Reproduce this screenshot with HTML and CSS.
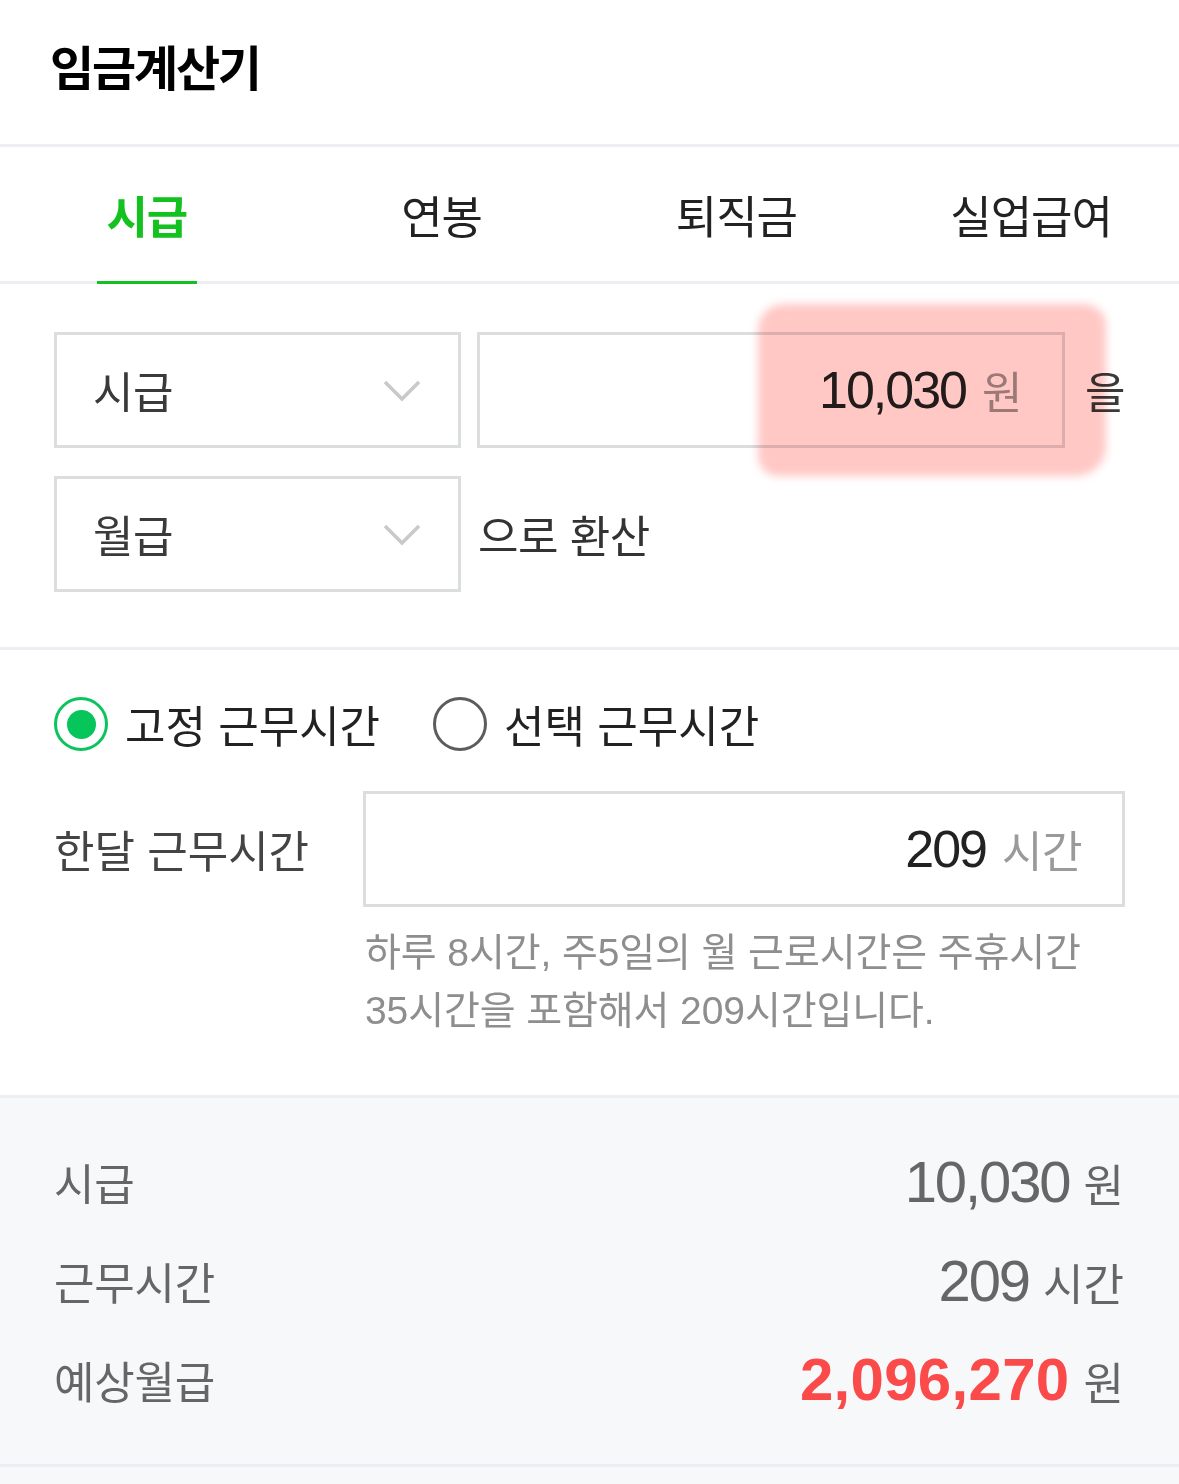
FILE: index.html
```html
<!DOCTYPE html>
<html lang="ko">
<head>
<meta charset="utf-8">
<title>임금계산기</title>
<link rel="stylesheet" href="styles.css">
</head>
<body>
<div class="page">
  <header class="header">
    <h1 class="title">임금계산기</h1>
  </header>

  <nav class="tabs">
    <div class="tab active"><span class="tab-label">시급</span></div>
    <div class="tab"><span class="tab-label">연봉</span></div>
    <div class="tab"><span class="tab-label">퇴직금</span></div>
    <div class="tab"><span class="tab-label">실업급여</span></div>
  </nav>

  <section class="convert">
    <div class="row row-first">
      <div class="select">
        <span class="select-text">시급</span>
        <svg class="chevron" width="38" height="22" viewBox="0 0 38 22"><polyline points="2,2 19,19 36,2" fill="none" stroke="#c9c9c9" stroke-width="3.5"/></svg>
      </div>
      <div class="amount">
        <span class="num">10,030</span><span class="unit">원</span>
      </div>
      <span class="suffix">을</span>
      <div class="highlight"></div>
    </div>
    <div class="row">
      <div class="select">
        <span class="select-text">월급</span>
        <svg class="chevron" width="38" height="22" viewBox="0 0 38 22"><polyline points="2,2 19,19 36,2" fill="none" stroke="#c9c9c9" stroke-width="3.5"/></svg>
      </div>
      <span class="convert-text">으로 환산</span>
    </div>
  </section>

  <section class="hours">
    <div class="radios">
      <label class="radio-item">
        <span class="radio checked"><span class="dot"></span></span>
        <span class="radio-text">고정 근무시간</span>
      </label>
      <label class="radio-item">
        <span class="radio"></span>
        <span class="radio-text">선택 근무시간</span>
      </label>
    </div>
    <div class="hours-row">
      <span class="hours-label">한달 근무시간</span>
      <div class="hours-input">
        <span class="num">209</span><span class="unit">시간</span>
      </div>
    </div>
    <p class="help">하루 8시간, 주5일의 월 근로시간은 주휴시간<br>35시간을 포함해서 209시간입니다.</p>
  </section>

  <section class="result">
    <div class="result-row">
      <span class="result-label">시급</span>
      <span class="result-value"><span class="rnum">10,030</span><span class="runit">원</span></span>
    </div>
    <div class="result-row">
      <span class="result-label">근무시간</span>
      <span class="result-value"><span class="rnum">209</span><span class="runit">시간</span></span>
    </div>
    <div class="result-row">
      <span class="result-label">예상월급</span>
      <span class="result-value"><span class="rnum total">2,096,270</span><span class="runit">원</span></span>
    </div>
  </section>
</div>
</body>
</html>
```

FILE: styles.css
```css
html, body {
  margin: 0;
  padding: 0;
  background: #f7f8fa;
}

body {
  font-family: "Liberation Sans", "Noto Sans CJK KR", sans-serif;
  color: #222;
}

.page {
  width: 1179px;
}

.header {
  background: #fff;
  display: flex;
  align-items: center;
  padding-left: 50px;
  box-sizing: border-box;
  border-bottom: 3px solid #eceef1;
  height: 147px;
}

.title {
  margin: 0;
  font-size: 48px;
  font-weight: 700;
  letter-spacing: -2.2px;
  color: #000;
  line-height: 1;
  transform: translateY(-2px);
}

.tabs {
  display: grid;
  grid-template-columns: repeat(4, 1fr);
  height: 137px;
  box-sizing: border-box;
  background: #fff;
  border-bottom: 3px solid #eceef1;
}

.tab {
  display: flex;
  justify-content: center;
  font-size: 45px;
  color: #222;
  letter-spacing: -1px;
}

.tab-label {
  position: relative;
  display: flex;
  align-items: center;
  padding: 0 10px 0 9px;
}

.tab.active {
  color: #13c11f;
  font-weight: 700;
}

.tab.active .tab-label::after {
  content: "";
  position: absolute;
  left: 0;
  right: 0;
  bottom: -3px;
  height: 3px;
  background: #13c11f;
}

.convert {
  background: #fff;
  padding: 48px 55px 55px 54px;
  display: flex;
  flex-direction: column;
  gap: 28px;
  border-bottom: 3px solid #eceef1;
}

.row {
  display: flex;
  align-items: center;
  height: 116px;
}

.row-first {
  position: relative;
}

.select {
  width: 407px;
  height: 116px;
  box-sizing: border-box;
  border: 3px solid #dcdddf;
  display: flex;
  align-items: center;
  justify-content: space-between;
  padding: 0 37px 0 36px;
  flex: none;
}

.select-text {
  font-size: 44px;
  color: #3a3a3a;
  letter-spacing: -0.5px;
}

.chevron {
  display: block;
  margin-top: 2px;
}

.amount {
  flex: 1;
  margin-left: 16px;
  height: 116px;
  box-sizing: border-box;
  border: 3px solid #dcdddf;
  display: flex;
  align-items: center;
  justify-content: flex-end;
  padding-right: 40px;
}

.num {
  font-size: 52px;
  letter-spacing: -2px;
  color: #222;
}

.unit {
  font-size: 44px;
  color: #9a9a9a;
  margin-left: 16px;
  letter-spacing: -0.5px;
}

.suffix {
  margin-left: 20px;
  font-size: 44px;
  color: #3a3a3a;
  width: 39px;
}

.highlight {
  position: absolute;
  left: 704px;
  top: -28px;
  width: 348px;
  height: 172px;
  background: #ffc8c5;
  border-radius: 26px 22px 30px 20px;
  filter: blur(4px);
  mix-blend-mode: multiply;
  pointer-events: none;
}

.convert-text {
  margin-left: 17px;
  font-size: 44px;
  color: #333;
  letter-spacing: -0.5px;
}

.hours {
  background: #fff;
  padding: 47px 54px 55px 54px;
  border-bottom: 3px solid #eceef1;
}

.radios {
  display: flex;
  align-items: center;
  height: 54px;
}

.radio-item {
  display: flex;
  align-items: center;
  margin-right: 53px;
}

.radio {
  width: 54px;
  height: 54px;
  box-sizing: border-box;
  border: 3px solid #5c5c5e;
  border-radius: 50%;
  display: flex;
  align-items: center;
  justify-content: center;
  flex: none;
}

.radio.checked {
  border-color: #0bc45d;
}

.dot {
  width: 29px;
  height: 29px;
  border-radius: 50%;
  background: #06c55a;
}

.radio-text {
  margin-left: 17px;
  font-size: 44px;
  color: #222;
  letter-spacing: 0;
}

.hours-row {
  display: flex;
  align-items: center;
  margin-top: 40px;
}

.hours-label {
  width: 309px;
  flex: none;
  font-size: 44px;
  color: #444;
  letter-spacing: 0;
}

.hours-input {
  flex: 1;
  height: 116px;
  box-sizing: border-box;
  border: 3px solid #dcdddf;
  display: flex;
  align-items: center;
  justify-content: flex-end;
  padding-right: 40px;
}

.help {
  margin: 17px 0 0 311px;
  font-size: 39px;
  line-height: 58px;
  color: #8e8e8e;
  letter-spacing: -0.1px;
}

.result {
  background: #f7f8fa;
  padding: 34px 55px 35px 54px;
  border-bottom: 3px solid #eceef1;
}

.result-row {
  display: flex;
  align-items: center;
  justify-content: space-between;
  height: 99px;
}

.result-label {
  font-size: 44px;
  color: #666;
  letter-spacing: -0.2px;
}

.result-value {
  display: flex;
  align-items: baseline;
}

.rnum {
  font-size: 58px;
  color: #666;
  letter-spacing: -2.1px;
}

.rnum.total {
  font-size: 60px;
  font-weight: 700;
  color: #fa4a4a;
  letter-spacing: 0.3px;
}

.runit {
  font-size: 44px;
  color: #666;
  margin-left: 14px;
  letter-spacing: 0;
}
```
